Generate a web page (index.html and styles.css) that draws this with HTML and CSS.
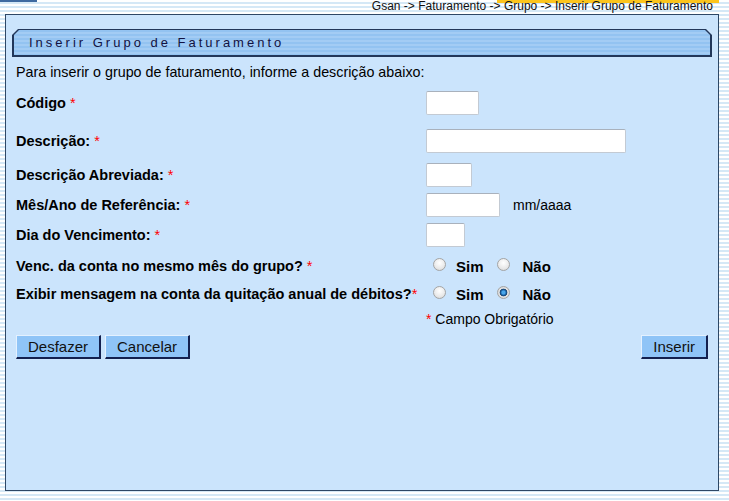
FILE: index.html
```html
<!doctype html>
<html lang="pt-br">
<head>
  <meta charset="utf-8">
  <title>Inserir Grupo de Faturamento</title>
  <link rel="stylesheet" href="styles.css">
</head>
<body>
<div class="top">
  <div class="top-strip"></div>
  <div class="crumb">Gsan -&gt; Faturamento -&gt; Grupo -&gt; Inserir Grupo de Faturamento</div>
</div>

<div class="panel">
  <div class="title-frame"><div class="title">Inserir Grupo de Faturamento</div></div>

  <div class="content">
    <p class="intro">Para inserir o grupo de faturamento, informe a descrição abaixo:</p>

    <div class="form">
      <label>Código <span class="req">*</span></label>
      <div><input type="text" class="w53"></div>

      <label>Descrição: <span class="req">*</span></label>
      <div><input type="text" class="w200"></div>

      <label>Descrição Abreviada: <span class="req">*</span></label>
      <div><input type="text" class="w46"></div>

      <label>Mês/Ano de Referência: <span class="req">*</span></label>
      <div class="field-row"><input type="text" class="w74"><span class="hint">mm/aaaa</span></div>

      <label>Dia do Vencimento: <span class="req">*</span></label>
      <div><input type="text" class="w39"></div>

      <label>Venc. da conta no mesmo mês do grupo? <span class="req">*</span></label>
      <div class="choices">
        <input type="radio" name="venc"><b>Sim</b><input type="radio" name="venc"><b>Não</b>
      </div>

      <label>Exibir mensagem na conta da quitação anual de débitos?<span class="req">*</span></label>
      <div class="choices">
        <input type="radio" name="quit"><b>Sim</b><input type="radio" name="quit" checked><b>Não</b>
      </div>

      <div></div>
      <div class="note"><span class="req">*</span> Campo Obrigatório</div>
    </div>

    <div class="actions">
      <div class="left-btns">
        <button>Desfazer</button>
        <button>Cancelar</button>
      </div>
      <button>Inserir</button>
    </div>
  </div>
</div>
</body>
</html>
```

FILE: styles.css
```css
body {
  margin: 0;
  height: 501px;
  font-family: "Liberation Sans", Arial, sans-serif;
  font-size: 14px;
  color: #000;
  background: repeating-linear-gradient(to bottom, #ffffff 0 2px, #d5e8f6 2px 4px);
}

.top {
  display: flex;
  height: 14px;
  margin-right: 10px;
}
.top-strip {
  width: 37px;
  height: 2px;
  background-color: #3f6aa0;
}
.crumb {
  flex: 1;
  text-align: right;
  padding-right: 6px;
  font-size: 12px;
  line-height: 13px;
  color: #111;
  background: linear-gradient(#fcc41c, #fcc41c) no-repeat right top / 222px 3px;
}

.panel {
  box-sizing: border-box;
  height: 477px;
  margin: 0 10px 0 5px;
  padding: 14px 6px 0 6px;
  border: 1px solid #2e4765;
  background-color: #cbe4fc;
}

.title-frame {
  padding: 1px 2px 2px 2px;
  background-color: #22375a;
  clip-path: polygon(6px 0, calc(100% - 6px) 0, 100% 6px, 100% 100%, 0 100%, 0 6px);
}
.title {
  height: 25px;
  line-height: 26px;
  padding-left: 15px;
  font-size: 13px;
  letter-spacing: 3px;
  color: #121242;
  background: repeating-linear-gradient(to bottom, #93c3f1 0 2px, #a3ccf4 2px 4px);
  clip-path: polygon(5px 0, calc(100% - 5px) 0, 100% 5px, 100% 100%, 0 100%, 0 5px);
}

.content {
  padding: 0 4px;
}

.intro {
  margin: 5px 0 0 0;
  line-height: 20px;
  font-size: 14.3px;
}

.form {
  display: grid;
  grid-template-columns: 410px 1fr;
  grid-template-rows: 34px 42px 26px 34px 26px 36px 20px 30px;
  align-items: center;
  margin-top: 4px;
}
.form label {
  font-weight: bold;
  font-size: 14.5px;
}
.req {
  color: #ff0000;
  font-weight: normal;
}

input[type=text] {
  box-sizing: border-box;
  height: 24px;
  margin: 0;
  border: 1px solid #c3cad3;
  border-top-color: #a9b1bc;
  border-radius: 2px;
  background-color: #fff;
}
.w53 { width: 53px; }
.w200 { width: 200px; }
.w46 { width: 46px; }
.w74 { width: 74px; }
.w39 { width: 39px; }

.field-row {
  display: flex;
  align-items: center;
}
.hint {
  margin-left: 13px;
}

.choices {
  font-size: 15px;
}
.choices b {
  font-weight: bold;
}
input[type=radio] {
  appearance: none;
  -webkit-appearance: none;
  box-sizing: border-box;
  width: 13px;
  height: 13px;
  margin: 0 10px 1px 7px;
  vertical-align: baseline;
  border: 1px solid #a4a4a4;
  border-radius: 50%;
  background: radial-gradient(circle at 50% 35%, #ffffff 0, #e9e9e9 60%, #d2d2d2 100%);
}
input[type=radio] + b + input[type=radio] {
  margin-left: 13px;
  margin-right: 13px;
}
input[type=radio]:checked {
  background: radial-gradient(circle, #4aa6ea 0 1.5px, #1f6bb0 2.5px, #123f6e 3.5px, #e4e4e4 4.2px, #d0d0d0 100%);
}

.note {
  line-height: 20px;
}

.actions {
  display: flex;
  justify-content: space-between;
  margin-top: 1px;
}
.left-btns {
  display: flex;
  gap: 4px;
}
button {
  height: 24px;
  padding: 0 11px;
  font-family: "Liberation Sans", Arial, sans-serif;
  font-size: 15px;
  color: #111;
  background-color: #8fc4f7;
  border-style: solid;
  border-width: 1px 2px 2px 1px;
  border-color: #e4f1ff #13204f #13204f #e4f1ff;
  border-radius: 0;
}
```
